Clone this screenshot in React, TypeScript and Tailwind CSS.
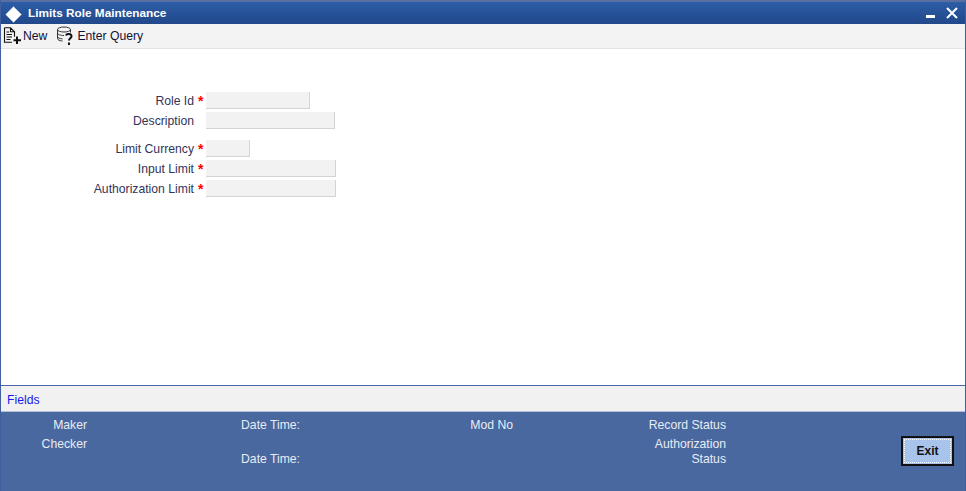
import React from "react";

const fields = [
  { label: "Role Id", required: true, width: "w-[104px]", gap: "mb-[3px]" },
  { label: "Description", required: false, width: "w-[129px]", gap: "mb-[11px]" },
  { label: "Limit Currency", required: true, width: "w-[44px]", gap: "mb-[3px]" },
  { label: "Input Limit", required: true, width: "w-[130px]", gap: "mb-[3px]" },
  { label: "Authorization Limit", required: true, width: "w-[130px]", gap: "" },
];

const NewIcon = () => (
  <svg width="19" height="18" viewBox="0 0 19 18" fill="none" stroke="#111" strokeWidth="1.1">
    <path d="M1.500 .8h6l4 4v5M1.500 .8v14.400h7.500M7.500 .8v4h4M3.500 5h2.500M3.500 7.500h5.500M3.500 10h5.500M3.500 12.500h4" />
    <path d="M14 9.500v7.500M10.500 13.200h7.500" strokeWidth="2" />
  </svg>
);

const QueryIcon = () => (
  <svg width="19" height="20" viewBox="0 0 19 20" fill="none" stroke="#333" strokeWidth="1">
    <ellipse cx="8" cy="3.500" rx="6.500" ry="2.500" />
    <path d="M1.500 3.500v9c0 1.300 2 2.300 5 2.500M14.500 3.500v3M1.500 7c0 1.400 3 2.500 6.500 2.500M1.500 10.500c0 1.200 2 2.200 5 2.400" />
    <path d="M10 9.500c.5-2 5.500-2 5.500 .8 0 2-2.500 2-2.500 4.200M13 16.500v2.500" stroke="#111" strokeWidth="2" />
  </svg>
);

export default function App() {
  return (
    <div className="flex h-[491px] w-[966px] flex-col overflow-hidden border-x border-[#3f5f9f] bg-white font-['Liberation_Sans',Arial,sans-serif] text-[12.2px] text-[#33335a]">
      <div className="flex h-[24px] shrink-0 items-center justify-between border-t-2 border-[#5a6f9f] bg-gradient-to-b from-[#2d5da6] to-[#21488a] pl-[4px] pr-[7px] pt-[2px] text-white">
        <div className="flex items-center gap-[6px]">
          <svg width="17" height="17" viewBox="0 0 17 17">
            <path d="M8.500 .5l8 8-8 8-8-8z" fill="#fff" />
            <path d="M8.500 .5l8 8-8 8" fill="none" stroke="#9db4d8" strokeWidth="1" />
          </svg>
          <span className="text-[11.8px] font-bold">Limits Role Maintenance</span>
        </div>
        <div className="-mt-[3px] flex items-center gap-[10px]">
          <svg width="10" height="10" viewBox="0 0 10 10">
            <path d="M0 7h9v3H0z" fill="#fff" />
          </svg>
          <svg width="12" height="12" viewBox="0 0 12 12" stroke="#fff" strokeWidth="2">
            <path d="M1 1l10 10M11 1L1 11" />
          </svg>
        </div>
      </div>

      <div className="flex h-[25px] shrink-0 items-center gap-[9px] border-b border-[#e4e4e4] bg-[#f3f3f3] pl-[2px] text-[12.2px] text-[#111133]">
        <div className="flex items-center gap-px">
          <NewIcon />
          <span className="pt-px">New</span>
        </div>
        <div className="flex items-center gap-[2px]">
          <QueryIcon />
          <span className="pt-px">Enter Query</span>
        </div>
      </div>

      <div className="flex min-h-0 flex-1 flex-col border-b border-[#4a69ad] pt-[43px]">
        {fields.map((f) => (
          <div key={f.label} className={`flex h-[17px] items-center ${f.gap}`}>
            <span className="w-[193px] pt-px text-right">{f.label}</span>
            <span className="w-[12px] pl-[4px] text-[14px] font-bold leading-none text-[#ff0000]">
              {f.required ? "*" : ""}
            </span>
            <div className={`h-[17px] ${f.width} border-b border-r border-[#d4d4d4] bg-[#f2f2f2]`} />
          </div>
        ))}
      </div>

      <div className="flex h-[26px] shrink-0 items-center border-b border-[#b4c0d8] bg-[#f1f1f1] pl-[6px] pt-[3px] text-[12.2px] text-[#1a1aee]">
        Fields
      </div>

      <div className="relative h-[79px] shrink-0 bg-[#48689f] text-[12.2px] text-[#e8ecf4]">
        <div className="grid grid-cols-[86px_213px_213px_213px] pt-[6px] text-right leading-[14px]">
          <span>Maker</span>
          <span>Date Time:</span>
          <span>Mod No</span>
          <span>Record Status</span>
          <span className="mt-[5px]">Checker</span>
          <span className="col-span-2" />
          <span className="mt-[5px]">Authorization</span>
          <span />
          <span className="mt-px">Date Time:</span>
          <span />
          <span className="mt-px">Status</span>
        </div>
        <button className="absolute right-[11px] top-[24px] flex h-[30px] w-[53px] items-center justify-center border-2 border-[#111] bg-[#a9c4ea] p-px text-[12px] font-bold text-[#111]">
          <span className="flex h-full w-full items-center justify-center border border-dotted border-white">
            Exit
          </span>
        </button>
      </div>
    </div>
  );
}
